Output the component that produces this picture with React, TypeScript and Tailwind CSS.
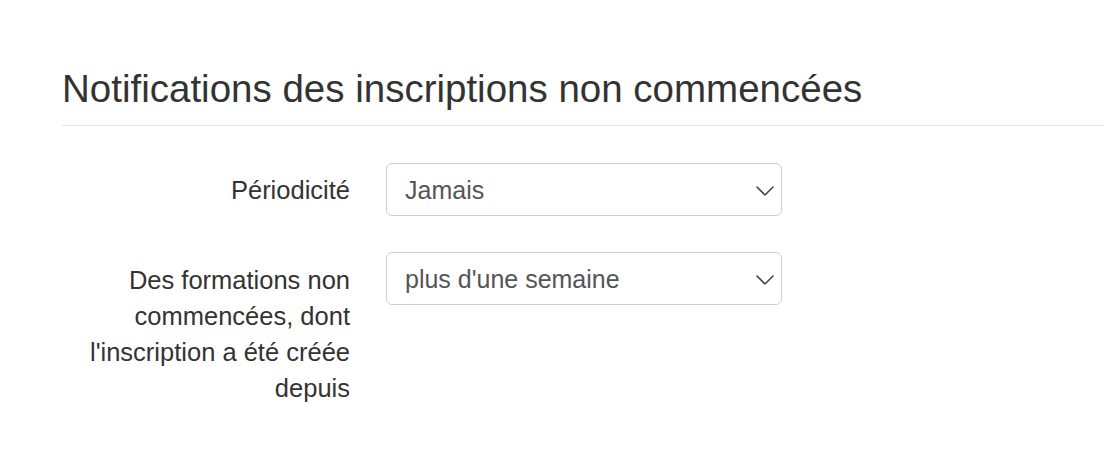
const font = { fontFamily: '"Liberation Sans", Arial, sans-serif' };

function Chevron() {
  return (
    <svg width="18" height="10" viewBox="0 0 18 10" fill="none" className="text-[#444]">
      <polyline points="1,1 9,9 17,1" stroke="currentColor" strokeWidth="1.6" strokeLinecap="round" strokeLinejoin="round" />
    </svg>
  );
}

function FakeSelect({ value }: { value: string }) {
  return (
    <div className="flex h-[53px] w-[396px] items-center justify-between rounded-[6px] border border-[#cfcfcf] bg-white pl-[18px] pr-[7px] pt-[2px] text-[25px] text-[#555]">
      <span>{value}</span>
      <Chevron />
    </div>
  );
}

export default function App() {
  return (
    <div className="min-h-[474px] bg-white pl-[62px] pt-[66px] text-[#333]" style={font}>
      <h2 className="border-b border-[#e5e5e5] pb-[13px] text-[38.5px] leading-[46px] font-normal">
        Notifications des inscriptions non commencées
      </h2>
      <div className="mt-[37px] flex flex-col gap-[36px]">
        <div className="flex">
          <label className="w-[288px] pt-[9px] text-right text-[25.5px] leading-[36px]">
            Périodicité
          </label>
          <div className="ml-[36px]">
            <FakeSelect value="Jamais" />
          </div>
        </div>
        <div className="flex">
          <label className="w-[288px] pt-[10px] text-right text-[25.5px] leading-[36px]">
            Des formations non commencées, dont l'inscription a été créée depuis
          </label>
          <div className="ml-[36px]">
            <FakeSelect value="plus d'une semaine" />
          </div>
        </div>
      </div>
    </div>
  );
}
